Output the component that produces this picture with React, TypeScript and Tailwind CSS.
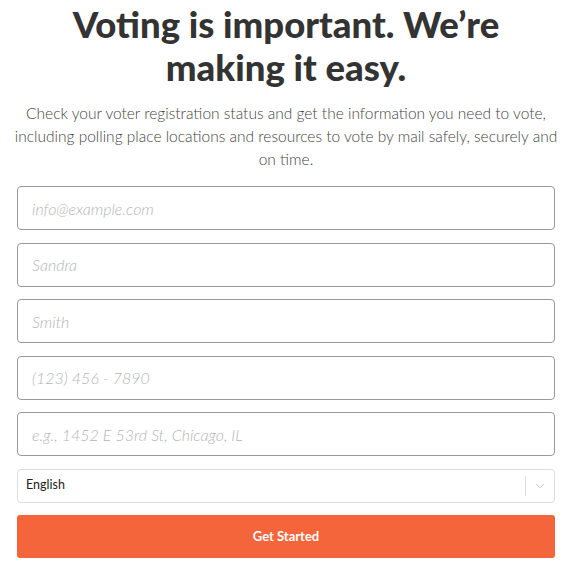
import { ChevronDown } from 'lucide-react'

const fields = [
  'info@example.com',
  'Sandra',
  'Smith',
  '(123) 456 - 7890',
  'e.g., 1452 E 53rd St, Chicago, IL',
]

export default function App() {
  return (
    <div className="bg-white min-h-screen font-['Lato','Liberation_Sans',sans-serif] pl-[17px] pr-[21px] pt-[3px]">
      {/* Hero */}
      <h1 className="text-center text-[36.5px] leading-[43px] font-black text-[#333]">
        Voting is important. We’re
        <br />
        making it easy.
      </h1>
      <p className="mt-[13px] -mx-[8px] text-center text-[15.5px] leading-[23px] font-light text-[#444]">
        Check your voter registration status and get the information you need to vote, including polling place locations and resources to vote by mail safely, securely and on time.
      </p>

      {/* Form */}
      <form className="mt-[15px] flex flex-col gap-[12.5px]">
        {fields.map(f => (
          <input
            key={f}
            placeholder={f}
            className="h-[44px] w-full rounded-[4px] border border-[#999] px-[14px] text-[16px] italic font-light text-[#333] placeholder:text-[#b5b5b5] outline-none"
          />
        ))}
        <div className="flex h-[34px] items-center rounded-[4px] border border-[#ddd] bg-white">
          <span className="flex-1 pl-[8px] text-[12.5px] text-[#222]">English</span>
          <span className="h-[20px] w-px bg-[#ddd]" />
          <span className="flex w-[28px] justify-center text-[#bbb]">
            <ChevronDown size={14} strokeWidth={1.5} />
          </span>
        </div>
        <button
          type="button"
          className="mt-[0px] h-[43px] w-full rounded-[3px] bg-[#f4653c] text-[13px] font-bold text-white"
        >
          Get Started
        </button>
      </form>
    </div>
  )
}
